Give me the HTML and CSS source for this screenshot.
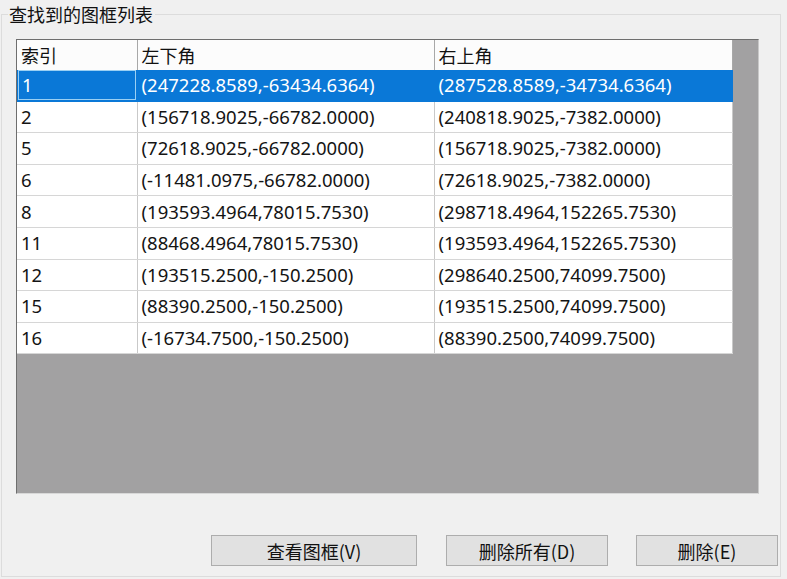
FILE: index.html
```html
<!DOCTYPE html>
<html>
<head>
<meta charset="utf-8">
<link rel="stylesheet" href="styles.css">
</head>
<body>
<div class="group">
  <div class="legend">查找到的图框列表</div>
  <div class="listview">
    <table class="grid">
      <colgroup><col class="c1"><col class="c2"><col class="c3"></colgroup>
      <thead>
        <tr><th>索引</th><th>左下角</th><th>右上角</th></tr>
      </thead>
      <tbody>
        <tr class="sel"><td><span class="focus">1</span></td><td>(247228.8589,-63434.6364)</td><td>(287528.8589,-34734.6364)</td></tr>
        <tr><td>2</td><td>(156718.9025,-66782.0000)</td><td>(240818.9025,-7382.0000)</td></tr>
        <tr><td>5</td><td>(72618.9025,-66782.0000)</td><td>(156718.9025,-7382.0000)</td></tr>
        <tr><td>6</td><td>(-11481.0975,-66782.0000)</td><td>(72618.9025,-7382.0000)</td></tr>
        <tr><td>8</td><td>(193593.4964,78015.7530)</td><td>(298718.4964,152265.7530)</td></tr>
        <tr><td>11</td><td>(88468.4964,78015.7530)</td><td>(193593.4964,152265.7530)</td></tr>
        <tr><td>12</td><td>(193515.2500,-150.2500)</td><td>(298640.2500,74099.7500)</td></tr>
        <tr><td>15</td><td>(88390.2500,-150.2500)</td><td>(193515.2500,74099.7500)</td></tr>
        <tr><td>16</td><td>(-16734.7500,-150.2500)</td><td>(88390.2500,74099.7500)</td></tr>
      </tbody>
    </table>
  </div>
  <div class="buttons">
    <button class="btn b-view">查看图框(V)</button>
    <button class="btn b-delall">删除所有(D)</button>
    <button class="btn b-del">删除(E)</button>
  </div>
</div>
</body>
</html>
```
FILE: styles.css
```css
html, body {
  margin: 0;
  padding: 0;
  background: #f0f0f0;
  width: 787px;
  height: 579px;
  overflow: hidden;
  font-family: "Noto Sans", "Noto Sans CJK SC", sans-serif;
  color: #000;
}

.group {
  position: relative;
  margin: 14px 0 0 1px;
  width: 780px;
  height: 563px;
  border: 1px solid #dcdcdc;
  box-sizing: border-box;
  padding: 24px 0 0 14px;
}

.legend {
  position: absolute;
  top: -12px;
  left: 6px;
  padding: 0 2px 0 1px;
  background: #f0f0f0;
  font-size: 18px;
  line-height: 22px;
  font-family: "Noto Sans CJK SC", sans-serif;
  color: #111;
}

.listview {
  width: 743px;
  height: 455px;
  box-sizing: border-box;
  background: #a2a1a2;
  border-top: 1px solid #6e6e6e;
  border-left: 1px solid #6e6e6e;
  border-right: 1px solid #c8c8c8;
  border-bottom: 1px solid #d8d8d8;
}

.grid {
  border-collapse: collapse;
  table-layout: fixed;
  width: 715px;
  background: #fff;
  font-size: 18.5px;
}

.c1 { width: 120px; }
.c2 { width: 297px; }
.c3 { width: 298px; }

.grid th {
  height: 30px;
  font-weight: normal;
  text-align: left;
  padding: 0 0 0 4px;
  background: #fcfcfc;
  border-right: 1px solid #a8a8a8;
  font-family: "Noto Sans CJK SC", sans-serif;
  font-size: 18px;
  line-height: 22px;
  color: #111;
}

.grid td {
  height: 30.6px;
  padding: 0 0 0 4px;
  border-bottom: 1px solid #d6d6d6;
  border-right: 1px solid #c9c9c9;
  white-space: nowrap;
  line-height: 22px;
  color: #141414;
}

.grid tr.sel td {
  background: #0a78d7;
  color: #fff;
  border-bottom-color: #0a78d7;
  border-right-color: #0a78d7;
}

.grid tr.sel td:first-child {
  padding: 0;
}

.focus {
  display: block;
  height: 28px;
  line-height: 28px;
  padding-left: 3px;
  margin: 0 1px 0 1px;
  border: 1px solid #9bd0f3;
}

.buttons {
  display: flex;
  margin-top: 41px;
  margin-left: 195px;
}

.btn {
  height: 31px;
  box-sizing: border-box;
  background: #e1e1e1;
  border: 1px solid #adadad;
  font-family: "Noto Sans CJK SC", sans-serif;
  font-size: 18px;
  line-height: 22px;
  color: #111;
  padding: 0;
}

.b-view { width: 206px; }
.b-delall { width: 162px; margin-left: 29px; }
.b-del { width: 142px; margin-left: 28px; }
```
